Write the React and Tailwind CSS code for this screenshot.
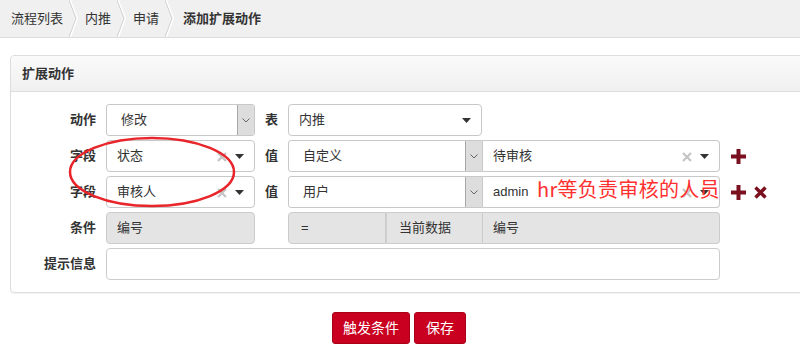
import React from 'react';

const font = { fontFamily: '"Liberation Sans", "Noto Sans CJK SC", sans-serif' };

const Chevron = () => (
  <svg width="10" height="37" viewBox="0 0 10 37" className="shrink-0">
    <polyline points="1,0 8,18.5 1,37" fill="none" stroke="#ffffff" strokeWidth="2" />
    <polyline points="0,0 7,18.5 0,37" fill="none" stroke="#cfcfcf" strokeWidth="1" />
  </svg>
);

const Caret = () => (
  <svg width="9" height="5" viewBox="0 0 9 5">
    <polygon points="0,0 9,0 4.5,5" fill="#333" />
  </svg>
);

const NativeSelect = ({ value, w, rounded = 'rounded-[3px]', pl = 'pl-[14px]' }) => (
  <div className={`flex h-[32px] ${w} shrink-0 items-center border border-[#c8c8c8] bg-white ${rounded} overflow-hidden`}>
    <span className={`flex-1 ${pl} text-[13px] text-[#333]`}>{value}</span>
    <div className="flex h-full w-[17px] items-center justify-center border-l border-[#a8a8a8] bg-[#dddddd]">
      <svg width="8" height="5" viewBox="0 0 8 5">
        <polyline points="0.5,0.5 4,4 7.5,0.5" fill="none" stroke="#666" strokeWidth="1" />
      </svg>
    </div>
  </div>
);

const ChosenSelect = ({ value, w, clear = true, rounded = 'rounded-[4px]' }) => (
  <div className={`relative flex h-[32px] ${w} shrink-0 items-center border border-[#c8c8c8] bg-white ${rounded}`}>
    <span className="flex-1 pl-[10px] text-[13px] text-[#333]">{value}</span>
    {clear && (
      <svg width="10" height="10" viewBox="0 0 10 10" className="absolute right-[27px] top-[11px]">
        <path d="M1 1 L9 9 M9 1 L1 9" stroke="#c4c4c4" strokeWidth="2.2" />
      </svg>
    )}
    <div className="absolute right-[10px] top-[13px] flex">
      <Caret />
    </div>
  </div>
);

const GrayBox = ({ value, w, rounded, pl = 'pl-[12px]' }) => (
  <div className={`flex h-[32px] ${w} shrink-0 items-center border border-[#cccccc] bg-[#e4e4e4] ${rounded}`}>
    <span className={`${pl} text-[13px] text-[#333]`}>{value}</span>
  </div>
);

const Label = ({ children }) => (
  <div className="w-[85px] shrink-0 pr-0 text-right text-[13px] font-bold text-[#333]">{children}</div>
);

const Label2 = ({ children }) => (
  <div className="w-[33px] shrink-0 text-center text-[13px] font-bold text-[#333]">{children}</div>
);

const Plus = () => (
  <svg width="15" height="15" viewBox="0 0 15 15" className="shrink-0">
    <rect x="5.5" y="0" width="4" height="15" fill="#7b1020" />
    <rect x="0" y="5.5" width="15" height="4" fill="#7b1020" />
  </svg>
);

const Times = () => (
  <svg width="13" height="13" viewBox="0 0 13 13" className="shrink-0">
    <path d="M1.5 1.5 L11.5 11.5 M11.5 1.5 L1.5 11.5" stroke="#7b1020" strokeWidth="3.4" />
  </svg>
);

export default function App() {
  return (
    <div className="relative h-[355px] w-[800px] overflow-hidden bg-white" style={font}>
      {/* breadcrumb */}
      <div className="flex h-[38px] items-center border-b border-[#dcdcdc] bg-[#f0f0f0] text-[13px] text-[#333]">
        <span className="ml-[11px]">流程列表</span>
        <span className="ml-[6px] mr-[6px] flex"><Chevron /></span>
        <span>内推</span>
        <span className="ml-[6px] mr-[6px] flex"><Chevron /></span>
        <span>申请</span>
        <span className="ml-[6px] mr-[8px] flex"><Chevron /></span>
        <span className="font-bold">添加扩展动作</span>
      </div>

      {/* panel */}
      <div className="ml-[10px] mt-[17px] w-[800px] rounded-[4px] border border-[#dddddd] shadow-[0_1px_1px_rgba(0,0,0,0.05)]">
        <div className="flex h-[36px] items-center rounded-t-[4px] border-b border-[#dddddd] bg-gradient-to-b from-[#fafafa] to-[#f0f0f0] pl-[11px] text-[13px] font-bold text-[#333]">
          扩展动作
        </div>
        <div className="flex flex-col gap-[4px] pb-[12px] pt-[12px]">
          <div className="flex items-center">
            <Label>动作</Label>
            <div className="ml-[10px] flex items-center">
              <NativeSelect value="修改" w="w-[149px]" />
              <Label2>表</Label2>
              <ChosenSelect value="内推" w="w-[194px]" clear={false} />
            </div>
          </div>

          <div className="flex items-center">
            <Label>字段</Label>
            <div className="ml-[10px] flex items-center">
              <ChosenSelect value="状态" w="w-[149px]" />
              <Label2>值</Label2>
              <NativeSelect value="自定义" w="w-[195px]" rounded="rounded-l-[3px]" />
              <ChosenSelect value="待审核" w="w-[237px]" rounded="rounded-r-[4px] border-l-0" />
              <div className="ml-[11px] flex"><Plus /></div>
            </div>
          </div>

          <div className="flex items-center">
            <Label>字段</Label>
            <div className="ml-[10px] flex items-center">
              <ChosenSelect value="审核人" w="w-[149px]" />
              <Label2>值</Label2>
              <NativeSelect value="用户" w="w-[195px]" rounded="rounded-l-[3px]" />
              <ChosenSelect value="admin" w="w-[237px]" rounded="rounded-r-[4px] border-l-0" />
              <div className="ml-[11px] flex"><Plus /></div>
              <div className="ml-[8px] flex"><Times /></div>
            </div>
          </div>

          <div className="flex items-center">
            <Label>条件</Label>
            <div className="ml-[10px] flex items-center">
              <GrayBox value="编号" w="w-[149px]" rounded="rounded-[4px]" pl="pl-[10px]" />
              <div className="w-[33px] shrink-0" />
              <GrayBox value="=" w="w-[98px]" rounded="rounded-l-[4px]" />
              <GrayBox value="当前数据" w="w-[97px]" rounded="border-l-[#d0d0d0]" />
              <GrayBox value="编号" w="w-[237px]" rounded="rounded-r-[4px] border-l-0" pl="pl-[10px]" />
            </div>
          </div>

          <div className="flex items-center">
            <Label>提示信息</Label>
            <div className="ml-[10px] h-[32px] w-[614px] rounded-[4px] border border-[#cccccc] bg-white" />
          </div>
        </div>
      </div>

      {/* buttons */}
      <div className="mt-[19px] flex justify-center gap-[4px] pr-[2px]">
        <button className="h-[32px] w-[78px] rounded-[3px] border border-[#a9001a] bg-[#c9001f] text-[14px] text-white">触发条件</button>
        <button className="h-[32px] w-[52px] rounded-[3px] border border-[#a9001a] bg-[#c9001f] text-[14px] text-white">保存</button>
      </div>

      {/* annotations */}
      <svg className="pointer-events-none absolute left-0 top-0" width="800" height="355">
        <ellipse cx="152" cy="172" rx="82" ry="34" fill="none" stroke="#e8252b" strokeWidth="2.5" />
      </svg>
      <div className="pointer-events-none absolute left-[537px] top-[179px] text-[20px] leading-[20px] tracking-[0.3px] text-[#ff3030]" style={{ fontFamily: '"Noto Sans CJK SC", sans-serif' }}>
        hr等负责审核的人员
      </div>
    </div>
  );
}
